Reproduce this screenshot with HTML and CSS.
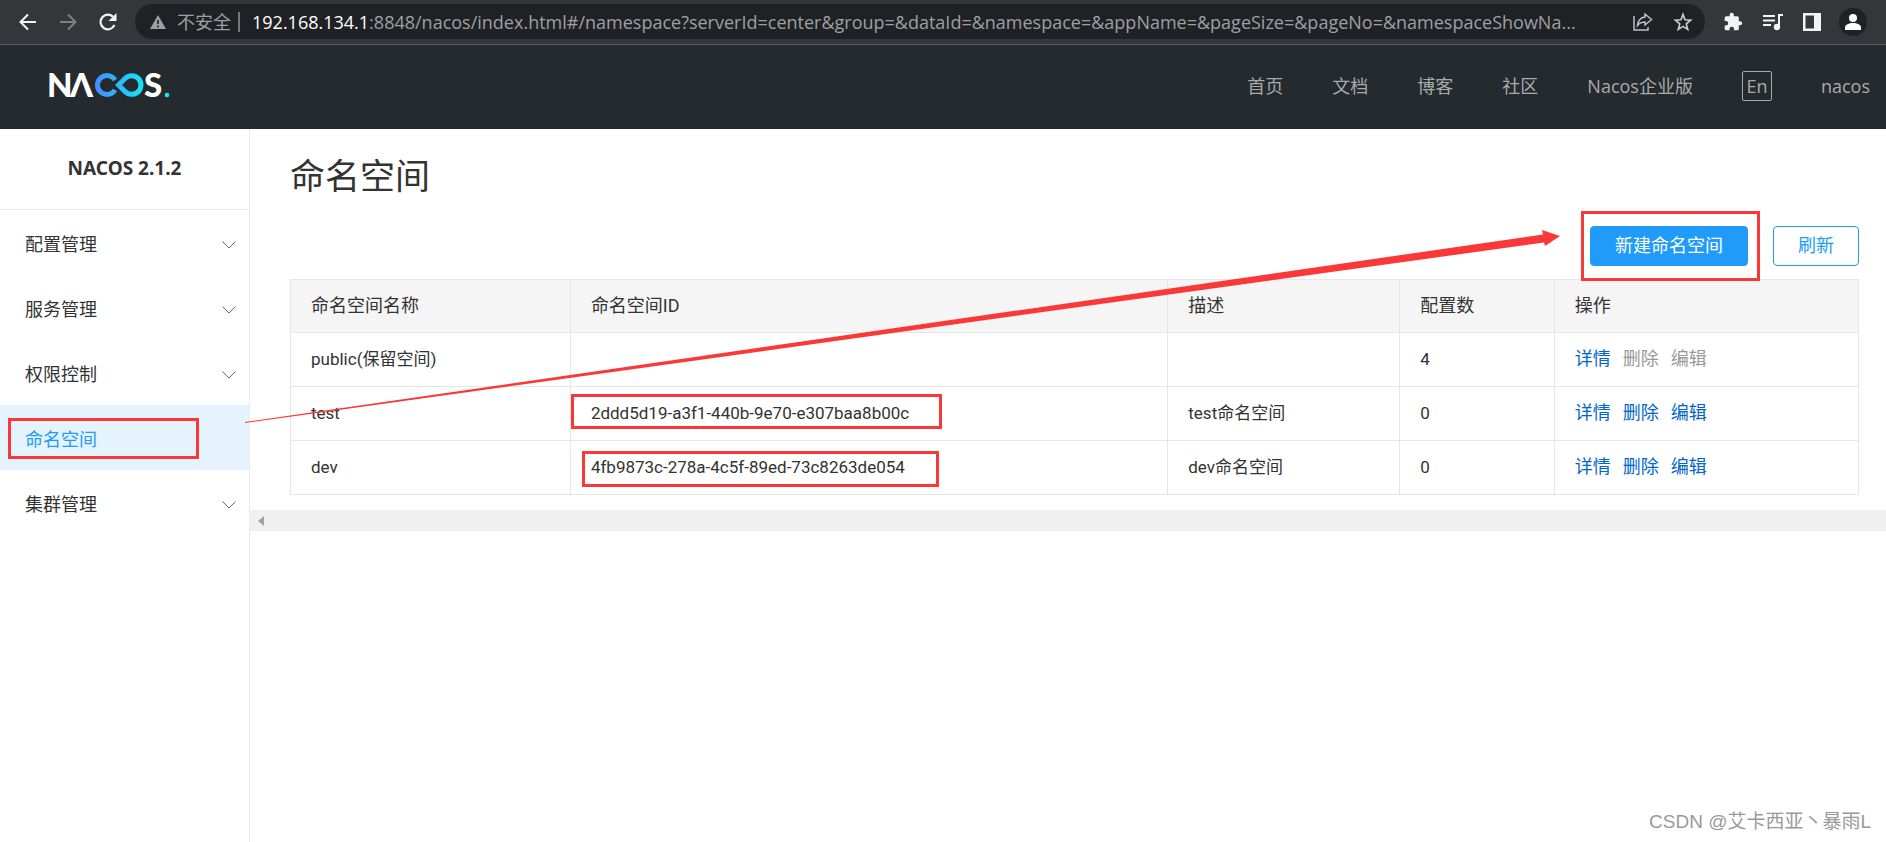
FILE: index.html
```html
<!DOCTYPE html>
<html lang="zh-CN">
<head>
<meta charset="utf-8">
<title>Nacos</title>
<link rel="stylesheet" href="styles.css">
</head>
<body>
<div class="toolbar">
  <button class="tool nav-back" aria-label="后退"><svg width="20" height="20" viewBox="0 0 20 20" fill="none" stroke="#f1f3f4" stroke-width="2"><path d="M18 10H3M10 2.500L2.500 10l7.500 7.500"/></svg></button>
  <button class="tool nav-forward" aria-label="前进"><svg width="20" height="20" viewBox="0 0 20 20" fill="none" stroke="#7d7f82" stroke-width="2"><path d="M2 10h15M10 2.500l7.500 7.500-7.500 7.500"/></svg></button>
  <button class="tool nav-reload" aria-label="重新加载"><svg width="20" height="20" viewBox="0 0 20 20"><path d="M16.500 13A7.300 7.300 0 1 1 15 4.800" fill="none" stroke="#f1f3f4" stroke-width="2.200"/><path d="M18.500 1v8h-8z" fill="#f1f3f4"/></svg></button>
  <div class="omnibox">
    <svg width="16" height="14" viewBox="0 0 16 14"><path d="M8 0l8 14H0z" fill="#9aa0a6"/><path d="M8 5v4M8 10.500v2" stroke="#202124" stroke-width="1.600"/></svg>
    <span class="insecure">不安全</span>
    <span class="divider"></span>
    <span class="url"><b>192.168.134.1</b>:8848/nacos/index.html#/namespace?serverId=center&amp;group=&amp;dataId=&amp;namespace=&amp;appName=&amp;pageSize=&amp;pageNo=&amp;namespaceShowNa...</span>
    <button class="tool share" aria-label="分享"><svg width="20" height="20" viewBox="0 0 20 20" fill="none" stroke="#bdc1c6" stroke-width="1.500"><path d="M1 4v14h14v-3M12 2l6.500 5.500L12 13V10C8.500 10 6.500 11 4.500 13.500 5 9 7.500 5.500 12 5z"/></svg></button>
    <button class="tool" aria-label="收藏"><svg width="20" height="20" viewBox="0 0 20 20" fill="none" stroke="#c8cacd" stroke-width="1.700"><path d="M10 2.500l2 5.300 5.600.4-4.300 3.700 1.400 5.500L10 14.400l-4.700 3 1.400-5.500L2.400 8.200l5.600-.4z"/></svg></button>
  </div>
  <div class="extensions">
    <button class="tool" aria-label="扩展程序"><svg width="20" height="20" viewBox="0 0 24 24" fill="#f1f3f4"><path d="M20.500 11H19V7a2 2 0 0 0-2-2h-4V3.500a2.500 2.500 0 0 0-5 0V5H4a2 2 0 0 0-2 2v3.800h1.500a2.700 2.700 0 0 1 0 5.400H2V20a2 2 0 0 0 2 2h3.800v-1.500a2.700 2.700 0 0 1 5.400 0V22H17a2 2 0 0 0 2-2v-4h1.500a2.500 2.500 0 0 0 0-5z"/></svg></button>
    <button class="tool" aria-label="媒体"><svg width="20" height="18" viewBox="0 0 20 18" fill="none" stroke="#f1f3f4" stroke-width="2"><path d="M0 3h12M0 7.500h12M0 12h8M16 13V2h4"/><circle cx="14" cy="14" r="2.200" fill="#f1f3f4"/></svg></button>
    <button class="tool" aria-label="侧边栏"><svg width="18" height="18" viewBox="0 0 18 18"><path fill="#f1f3f4" fill-rule="evenodd" d="M0 0h18v18H0zM2.500 2.500v13H11v-13z"/></svg></button>
    <button class="tool profile" aria-label="用户"><svg width="18" height="18" viewBox="0 0 18 18" fill="#fff"><circle cx="9" cy="5" r="4"/><path d="M1 17v-2.500c0-3 4-4.500 8-4.500s8 1.500 8 4.500V17z"/></svg></button>
  </div>
</div>

<header class="site-header">
  <a class="logo" href="#" aria-label="NACOS">
    <svg width="126" height="48" viewBox="-4 -10 126 48">
      <defs><linearGradient id="loop" gradientUnits="userSpaceOnUse" x1="45" y1="0" x2="95" y2="0"><stop offset="0" stop-color="#438bff"/><stop offset="1" stop-color="#14e6f6"/></linearGradient></defs>
      <g class="logo-text"><text x="-2" y="25">N</text><text x="21" y="25">Λ</text><text x="95" y="25">S</text></g>
      <path d="M66 8A9.500 9.500 0 1 0 66 18M69.500 13L76 6.500A9.300 9.300 0 1 1 76 19.500z" fill="none" stroke="url(#loop)" stroke-width="5"/>
      <circle cx="118" cy="23" r="2.300" fill="#14e6f6"/>
    </svg>
  </a>
  <nav class="site-nav">
    <a href="#">首页</a><a href="#">文档</a><a href="#">博客</a><a href="#">社区</a><a href="#">Nacos企业版</a>
    <button class="lang">En</button>
    <a href="#">nacos</a>
  </nav>
</header>

<div class="layout">
  <aside class="sidebar">
    <h2 class="version">NACOS 2.1.2</h2>
    <ul class="menu">
      <li><a href="#">配置管理<svg class="chevron" width="14" height="8" viewBox="0 0 14 8"><path d="M.5.500L7 7 13.500.500"/></svg></a></li>
      <li><a href="#">服务管理<svg class="chevron" width="14" height="8" viewBox="0 0 14 8"><path d="M.5.500L7 7 13.500.500"/></svg></a></li>
      <li><a href="#">权限控制<svg class="chevron" width="14" height="8" viewBox="0 0 14 8"><path d="M.5.500L7 7 13.500.500"/></svg></a></li>
      <li><a href="#" class="active">命名空间<span class="mark mark-menu"></span></a></li>
      <li><a href="#">集群管理<svg class="chevron" width="14" height="8" viewBox="0 0 14 8"><path d="M.5.500L7 7 13.500.500"/></svg></a></li>
    </ul>
  </aside>
  <main class="main">
    <div class="content">
      <h1>命名空间</h1>
      <div class="actions">
        <span class="marked"><button class="btn btn-primary">新建命名空间</button><span class="mark mark-create"></span></span>
        <button class="btn">刷新</button>
      </div>
      <table class="grid">
        <colgroup><col class="c-name"><col class="c-id"><col class="c-desc"><col class="c-count"><col></colgroup>
        <thead><tr><th>命名空间名称</th><th>命名空间ID</th><th>描述</th><th>配置数</th><th>操作</th></tr></thead>
        <tbody>
          <tr><td>public(保留空间)</td><td></td><td></td><td>4</td><td><div class="ops"><a href="#">详情</a><span>删除</span><span>编辑</span></div></td></tr>
          <tr><td>test</td><td class="marked">2ddd5d19-a3f1-440b-9e70-e307baa8b00c<span class="mark mark-test"></span></td><td>test命名空间</td><td>0</td><td><div class="ops"><a href="#">详情</a><a href="#">删除</a><a href="#">编辑</a></div></td></tr>
          <tr><td>dev</td><td class="marked">4fb9873c-278a-4c5f-89ed-73c8263de054<span class="mark mark-dev"></span></td><td>dev命名空间</td><td>0</td><td><div class="ops"><a href="#">详情</a><a href="#">删除</a><a href="#">编辑</a></div></td></tr>
        </tbody>
      </table>
    </div>
    <div class="scrollbar"><svg width="6" height="10" viewBox="0 0 6 10"><path d="M6 0v10L0 5z" fill="#a3a3a3"/></svg></div>
    <svg class="arrow" viewBox="0 0 1315 193" preserveAspectRatio="none"><path d="M0 192L1298 4.500 1297 0 1315 6 1300 16 1299 12.500 0 193z" fill="#fb3838"/></svg>
  </main>
</div>
<div class="watermark">CSDN @艾卡西亚丶暴雨L</div>
</body>
</html>
```
FILE: styles.css
```css
* { box-sizing: border-box; }
body {
  margin: 0;
  min-height: 100vh;
  display: flex;
  flex-direction: column;
  position: relative;
  background: #fff;
  color: #333;
  font: 18px/24px Roboto, "Noto Sans CJK SC", sans-serif;
  font-weight: 400;
}
a { color: inherit; text-decoration: none; }
button { font: inherit; color: inherit; cursor: pointer; }

/* Browser toolbar */
.toolbar {
  display: flex;
  align-items: center;
  height: 45px;
  padding: 4px 19px 5px 18px;
  background: #35363a;
  border-bottom: 1px solid #5b5c5f;
  font-family: "Open Sans", "Noto Sans CJK SC", sans-serif;
}
.tool {
  display: flex;
  align-items: center;
  justify-content: center;
  padding: 0;
  border: 0;
  background: none;
  flex: none;
}
.nav-forward { margin-left: 20px; }
.nav-reload { margin-left: 20px; }
.omnibox {
  flex: 1;
  min-width: 0;
  display: flex;
  align-items: center;
  height: 35px;
  margin-left: 17px;
  padding: 0 12px 0 15px;
  border-radius: 18px;
  background: #202124;
  color: #9aa0a6;
}
.omnibox svg { flex: none; }
.insecure { margin-left: 11px; white-space: nowrap; }
.divider { flex: none; width: 2px; height: 20px; margin: 0 12px 0 7px; background: #74777b; }
.url { flex: 1; min-width: 0; overflow: hidden; white-space: nowrap; }
.url b { color: #fff; font-weight: 400; }
.share { margin: 0 20px; }
.extensions { display: flex; align-items: center; gap: 20px; margin-left: 18px; }
.profile { width: 28px; height: 28px; margin-left: -2px; border-radius: 50%; background: #202124; }

/* Site header */
.site-header {
  display: flex;
  align-items: center;
  justify-content: space-between;
  height: 84px;
  padding: 0 16px 2px 45px;
  background: #252a2f;
  color: #a8aaac;
}
.logo { display: flex; }
.logo-text { fill: #fff; font: 900 33px Lato, sans-serif; }
.site-nav { display: flex; align-items: center; gap: 49px; font-family: "Open Sans", "Noto Sans CJK SC", sans-serif; }
.lang {
  width: 30px;
  height: 30px;
  padding: 0;
  border: 1px solid #a8aaac;
  border-radius: 2px;
  background: none;
}

/* Page layout */
.layout { flex: 1; display: flex; }
.sidebar { flex: none; width: 250px; border-right: 1px solid #ebebeb; }
.version {
  margin: 0;
  padding: 27px 0 29px;
  border-bottom: 1px solid #ebebeb;
  text-align: center;
  font: 700 19px/24px "Noto Sans", sans-serif;
}
.menu { list-style: none; margin: 0; padding: 0; }
.menu a {
  position: relative;
  display: flex;
  align-items: center;
  justify-content: space-between;
  height: 65px;
  padding: 5px 13px 0 25px;
}
.menu .active { background: #e4f3fe; color: #209bfa; }
.chevron { fill: none; stroke: #666; }

.main { flex: 1; min-width: 0; position: relative; }
.content { padding: 25px 27px 15px 40px; }
h1 { margin: 0; font-size: 35px; line-height: 48px; font-weight: 400; }
.actions { display: flex; justify-content: flex-end; gap: 25px; margin: 24px 0 13px; }
.btn {
  height: 40px;
  padding: 0 24px;
  border: 1px solid #209bfa;
  border-radius: 4px;
  background: #fff;
  color: #209bfa;
}
.btn-primary { background: #209bfa; color: #fff; }

.grid { width: 100%; table-layout: fixed; border-collapse: collapse; font-size: 17px; }
.c-name { width: 17.85%; }
.c-id { width: 38.1%; }
.c-desc { width: 14.8%; }
.c-count { width: 9.85%; }
.grid th, .grid td {
  height: 54px;
  padding: 0 20px 2px;
  border: 1px solid #e6e6e6;
  text-align: left;
  font-weight: 400;
}
.grid th { height: 53px; padding-bottom: 0; background: #f5f5f5; font-size: 18px; }
.ops { display: flex; gap: 12px; font-size: 18px; color: #999; }
.ops a { color: #06c; }

.scrollbar { display: flex; align-items: center; height: 21px; padding-left: 8px; background: #f0f0f0; }

/* Annotations drawn over the page */
.marked { position: relative; }
.mark { position: absolute; border: 3px solid #fb3838; pointer-events: none; }
.mark-menu { left: 8px; top: 13px; width: 191px; height: 41px; }
.mark-create { left: -9px; right: -12px; top: -15px; bottom: -15px; }
.mark-test { left: 0; top: 7px; width: 371px; height: 35px; }
.mark-dev { left: 11px; top: 10px; width: 357px; height: 36px; }
.arrow { position: absolute; left: -5px; top: 101px; width: calc(100% - 321px); height: 193px; pointer-events: none; }

.watermark {
  position: absolute;
  right: 15px;
  bottom: 8px;
  color: #999;
  font: 19px/24px "Liberation Sans", "Noto Sans CJK SC", sans-serif;
}
```
